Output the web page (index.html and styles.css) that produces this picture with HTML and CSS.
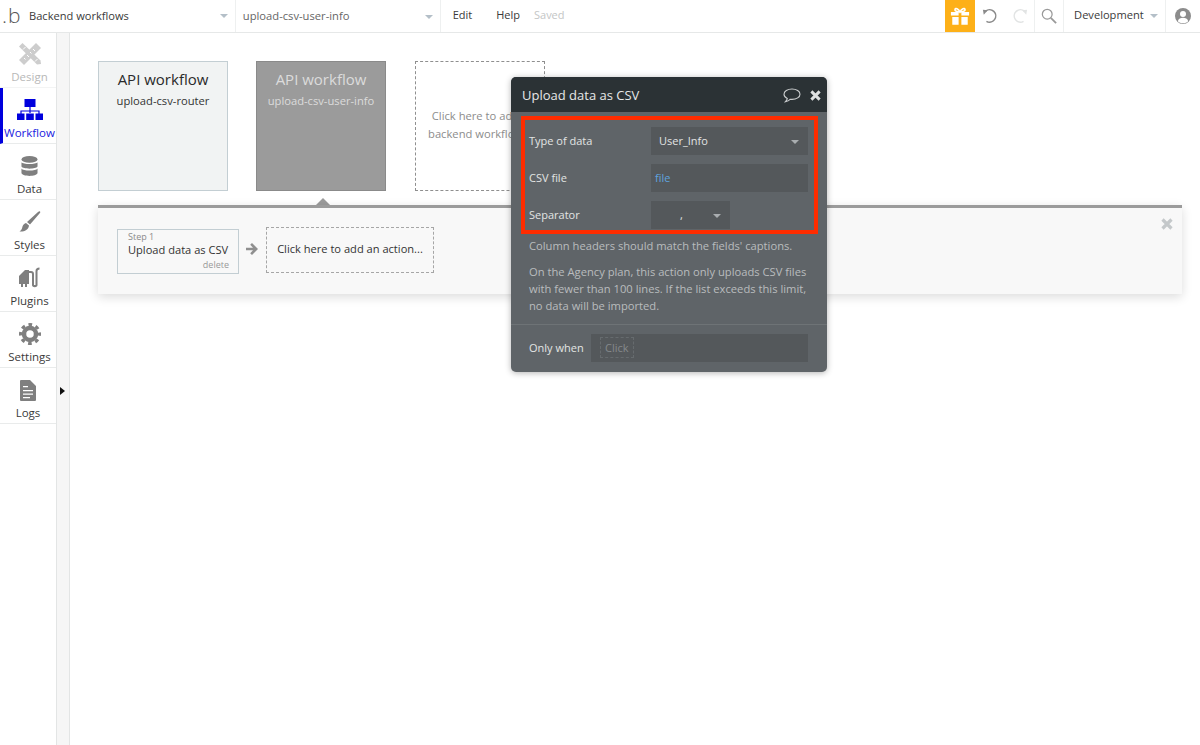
FILE: index.html
```html
<!DOCTYPE html>
<html lang="en">
<head>
    <meta charset="UTF-8">
    <title>Backend workflows</title>
    <meta name="viewport" content="width=device-width, initial-scale=1.0">
    <link rel="stylesheet" href="styles.css">
</head>
<body>
    <header class="topbar">
        <div class="logo"><span class="logo-dot">.</span>b</div>
        <div class="drop drop-page">
            <span>Backend workflows</span>
            <i class="caret"></i>
        </div>
        <div class="drop drop-flow">
            <span>upload-csv-user-info</span>
            <i class="caret"></i>
        </div>
        <nav class="menu">
            <span class="menu-edit">Edit</span>
            <span class="menu-help">Help</span>
            <span class="menu-saved">Saved</span>
        </nav>
        <div class="gift">
            <svg width="20" height="19" viewBox="0 0 22 20">
                <path fill="#fff" d="M1 5h8.500v4H1zM12.500 5H21v4h-8.500zM2.500 10.500h7V19h-7zM12.500 10.500h7V19h-7z"/>
                <path fill="none" stroke="#fff" stroke-width="1.800" d="M11 5C9 1 6 .5 5.500 2.200 5 4 8 5 11 5c3 0 6-1 5.500-2.800C16 .5 13 1 11 5z"/>
            </svg>
        </div>
        <div class="tool tool-undo">
            <svg width="16" height="16" viewBox="0 0 18 18">
                <path fill="none" stroke="#8a8a8a" stroke-width="1.700" d="M4 3.500A7 7 0 1 1 5 15"/>
                <path fill="#8a8a8a" d="M1 2l5.500.5L2 7.500z"/>
            </svg>
        </div>
        <div class="tool tool-redo">
            <svg width="16" height="16" viewBox="0 0 18 18">
                <path fill="none" stroke="#e2e4e4" stroke-width="1.700" d="M14 3.500A7 7 0 1 0 13 15"/>
                <path fill="#e2e4e4" d="M17 2l-5.500.5L16 7.500z"/>
            </svg>
        </div>
        <div class="tool tool-search">
            <svg width="16" height="16" viewBox="0 0 18 18">
                <circle cx="7" cy="7" r="5.500" fill="none" stroke="#999" stroke-width="1.400"/>
                <path stroke="#999" stroke-width="2" d="M11 11l6 6"/>
            </svg>
        </div>
        <div class="drop drop-env">
            <span>Development</span>
            <i class="caret"></i>
        </div>
        <div class="tool tool-user">
            <svg width="16" height="16" viewBox="0 0 16 16">
                <circle cx="8" cy="8" r="8" fill="#8c8c8c"/>
                <circle cx="8" cy="6" r="3" fill="#fff"/>
                <path fill="#fff" d="M2.800 13.200C3.500 10.500 5.500 9.800 8 9.800s4.500.7 5.200 3.400C11.800 14.700 10 15.300 8 15.300s-3.800-.6-5.200-2.100z"/>
            </svg>
        </div>
    </header>

    <div class="main">
        <aside class="sidebar">
            <div class="tab tab-muted">
                <svg width="22" height="22" viewBox="0 0 22 22">
                    <path fill="#cdcdcd" d="M3.500 0L0 3.500 18 21.500l4-.5-.5-3.500z"/>
                    <path fill="#cdcdcd" d="M17 0l5 5L5 22 0 17z"/>
                    <path stroke="#fff" stroke-width="1" d="M14 6l2 2M11 9l1.500 1.500M8 12l2 2M5 15l1.500 1.500M4 6.500L6.500 4M16 18.500l2.500-2.500"/>
                </svg>
                <span>Design</span>
            </div>
            <div class="tab tab-active">
                <svg width="26" height="22" viewBox="0 0 26 22">
                    <path fill="none" stroke="#0000dd" stroke-width="1.200" d="M13 8v6M4 15v-3h18v3"/>
                    <path fill="#0000dd" d="M7.500 0h11v8h-11zM0 14.500h7.500V21H0zM9.200 14.500h7.600V21H9.200zM18.500 14.500H26V21h-7.500z"/>
                </svg>
                <span>Workflow</span>
            </div>
            <div class="tab">
                <svg width="17" height="21" viewBox="0 0 18 22">
                    <ellipse cx="9" cy="3.500" rx="8.500" ry="3.500" fill="#7f7f7f"/>
                    <path fill="#7f7f7f" d="M.5 6.500C2 9 16 9 17.500 6.500v4.500C16 14 2 14 .5 11zM.5 13C2 16 16 16 17.500 13v5c-1 4-16 4-17 0z"/>
                </svg>
                <span>Data</span>
            </div>
            <div class="tab">
                <svg width="22" height="22" viewBox="0 0 22 22">
                    <path fill="#7f7f7f" d="M21 .5c.5.500.5 1-.5 2L11 13.500 8 11 19 1c1-.8 1.500-1 2-.5zM7 12l3 2.500C9.500 19 5 21 .500 20.500 3 19 3 17 3.500 15.500 4 13.500 5.500 12.500 7 12z"/>
                </svg>
                <span>Styles</span>
            </div>
            <div class="tab">
                <svg width="24" height="22" viewBox="0 0 24 22">
                    <path fill="#7f7f7f" d="M3 7l4-4h4v14H9v3H7v-3H5v3H3v-3H1V9z"/>
                    <path fill="none" stroke="#7f7f7f" stroke-width="2" d="M11 5h2c1.500 0 2 1 2 2v11c0 1.500 3.500 1.500 3.500 0V4c0-1.500 1-2.500 3-2.500"/>
                </svg>
                <span>Plugins</span>
            </div>
            <div class="tab">
                <svg width="22" height="22" viewBox="0 0 22 22">
                    <circle cx="11" cy="11" r="6" fill="none" stroke="#7f7f7f" stroke-width="4.500"/>
                    <circle cx="11" cy="11" r="9.500" fill="none" stroke="#7f7f7f" stroke-width="3" stroke-dasharray="3.700 3.760" stroke-dashoffset="1.850"/>
                </svg>
                <span>Settings</span>
            </div>
            <div class="tab tab-logs">
                <svg width="16" height="21" viewBox="0 0 16 21">
                    <path fill="#7f7f7f" fill-rule="evenodd" d="M1 0h9l6 6v14a1 1 0 0 1-1 1H1a1 1 0 0 1-1-1V1a1 1 0 0 1 1-1zM3 6v1.300h5V6zM3 10v1.300h10V10zM3 13.500v1.300h10v-1.300zM3 17v1.300h7V17z"/>
                </svg>
                <span>Logs</span>
            </div>
        </aside>
        <div class="strip"><i class="strip-arrow"></i></div>

        <section class="canvas">
            <div class="cards">
                <div class="card">
                    <h3>API workflow</h3>
                    <p>upload-csv-router</p>
                </div>
                <div class="card card-selected">
                    <h3>API workflow</h3>
                    <p>upload-csv-user-info</p>
                    <i class="card-pointer"></i>
                </div>
                <div class="card card-add">
                    <p>Click here to add a<br>backend workflow...</p>
                </div>
            </div>

            <div class="actions">
                <div class="step">
                    <small>Step 1</small>
                    <strong>Upload data as CSV</strong>
                    <em>delete</em>
                </div>
                <svg class="step-arrow" width="14" height="14" viewBox="0 0 14 14">
                    <path fill="#8f8f8f" d="M7 1l6 6-6 6-1.800-1.800L8 8.300H1V5.700h7L5.200 2.800z"/>
                </svg>
                <div class="add-action">Click here to add an action...</div>
                <svg class="close-panel" width="12" height="12" viewBox="0 0 12 12">
                    <path stroke="#c4c8ca" stroke-width="3.200" d="M1.500 1.500l9 9M10.500 1.500l-9 9"/>
                </svg>
            </div>
        </section>
    </div>

    <div class="modal">
        <div class="modal-head">
            <span class="modal-title">Upload data as CSV</span>
            <svg width="18" height="15" viewBox="0 0 18 15">
                <path fill="none" stroke="#c9cccd" stroke-width="1.100" d="M9 1C4.500 1 1 3.300 1 6.200c0 1.800 1.300 3.300 3.300 4.200-.2 1.300-.9 2.400-1.800 3.200 1.900-.3 3.500-1.100 4.600-2.300.6.100 1.200.1 1.900.1 4.500 0 8-2.300 8-5.200S13.500 1 9 1z"/>
            </svg>
            <svg class="modal-close" width="11" height="11" viewBox="0 0 12 12">
                <path stroke="#dfe1e2" stroke-width="3.200" d="M1.500 1.500l9 9M10.500 1.500l-9 9"/>
            </svg>
        </div>
        <div class="modal-body">
            <div class="highlight">
                <div class="field">
                    <label>Type of data</label>
                    <div class="input">User_Info<i class="caret caret-dark"></i></div>
                </div>
                <div class="field">
                    <label>CSV file</label>
                    <div class="input input-file">file</div>
                </div>
                <div class="field">
                    <label>Separator</label>
                    <div class="input input-small"><span>,</span><i class="caret caret-dark"></i></div>
                </div>
            </div>
            <p class="note note-first">Column headers should match the fields' captions.</p>
            <p class="note">On the Agency plan, this action only uploads CSV files with fewer than 100 lines. If the list exceeds this limit, no data will be imported.</p>
        </div>
        <div class="modal-foot">
            <label>Only when</label>
            <div class="input input-when"><span class="click-tag">Click</span></div>
        </div>
    </div>
</body>
</html>
```

FILE: styles.css
```css
* {
    box-sizing: border-box;
}

body {
    margin: 0;
    height: 745px;
    overflow: hidden;
    background: #fff;
    color: #333;
    font-family: "Open Sans", sans-serif;
    font-size: 11px;
    position: relative;
}

.topbar {
    height: 33px;
    display: flex;
    align-items: stretch;
    border-bottom: 1px solid #e6e8e8;
    background: #fff;
}

.logo {
    width: 23px;
    padding-left: 2px;
    font-size: 21px;
    font-weight: 300;
    line-height: 30px;
    color: #555;
}

.logo-dot {
    margin-right: 1px;
}

.drop {
    display: flex;
    align-items: center;
    justify-content: space-between;
    border-right: 1px solid #eef0f0;
    font-size: 11.100px;
    color: #3a3a3a;
}

.drop-page {
    width: 213px;
    padding: 0 7px 2px 6px;
}

.drop-flow {
    width: 205px;
    padding: 0 7px 1px 7px;
    color: #666;
    font-size: 11.200px;
}

.caret {
    width: 0;
    height: 0;
    border-left: 4.500px solid transparent;
    border-right: 4.500px solid transparent;
    border-top: 4.500px solid #b4bfc8;
    margin-top: 2px;
}

.menu {
    width: 505px;
    display: flex;
    align-items: center;
    padding: 0 0 3px 12px;
    font-size: 11px;
    color: #3a3a3a;
}

.menu-edit {
    margin-right: 24px;
}

.menu-help {
    margin-right: 14px;
}

.menu-saved {
    color: #c4c6c6;
}

.gift {
    width: 30px;
    background: #fdb018;
    display: flex;
    align-items: center;
    justify-content: center;
}

.tool {
    display: flex;
    align-items: center;
    justify-content: center;
}

.tool-undo {
    width: 30px;
}

.tool-redo {
    width: 30px;
    border-right: 1px solid #eef0f0;
}

.tool-search {
    width: 29px;
    border-right: 1px solid #eef0f0;
}

.drop-env {
    width: 102px;
    padding: 0 7px 3px 10px;
}

.tool-user {
    width: 34px;
}

.main {
    display: flex;
    height: 712px;
}

.sidebar {
    width: 57px;
    background: #fff;
    border-right: 1px solid #e3e5e5;
}

.tab {
    height: 56px;
    display: flex;
    flex-direction: column;
    align-items: center;
    justify-content: flex-end;
    gap: 4px;
    padding: 0 0 2px 3px;
    border-bottom: 1px solid #e9ebeb;
    color: #3a3a3a;
    font-size: 11.500px;
    line-height: 16px;
}

.tab svg {
    flex: none;
}

.tab:first-child {
    height: 55px;
    border-bottom-color: #f3f4f4;
}

.tab-muted {
    color: #b8b8b8;
}

.tab-active {
    color: #1a1ae0;
    border-left: 3px solid #0000dd;
    padding-left: 0;
}

.tab-logs {
    padding-right: 3px;
}

.strip {
    width: 13px;
    background: #f6f6f6;
    border-right: 1px solid #e3e5e5;
    position: relative;
}

.strip-arrow {
    position: absolute;
    left: 3px;
    top: 354px;
    width: 0;
    height: 0;
    border-top: 4px solid transparent;
    border-bottom: 4px solid transparent;
    border-left: 5px solid #111;
}

.canvas {
    flex: 1;
    padding: 28px 18px 0 28px;
}

.cards {
    display: flex;
    gap: 28px;
}

.card {
    width: 130px;
    height: 130px;
    background: #f1f3f3;
    border: 1px solid #c3ced3;
    text-align: center;
    padding-top: 6px;
    position: relative;
}

.card h3 {
    margin: 0;
    font-size: 15px;
    font-weight: 400;
    line-height: 22px;
    color: #2a2a2a;
}

.card p {
    margin: 3px 0 0;
    font-size: 11.200px;
    line-height: 16px;
    color: #333;
}

.card-selected {
    background: #9b9b9b;
    border-color: #8a8a8a;
    margin-right: 1px;
}

.card-selected h3,
.card-selected p {
    color: #dcdcdc;
}

.card-pointer {
    position: absolute;
    left: 59px;
    bottom: -15px;
    width: 0;
    height: 0;
    border-left: 7px solid transparent;
    border-right: 7px solid transparent;
    border-bottom: 7px solid #9b9b9b;
}

.card-add {
    background: #fff;
    border: 1px dashed #8f8f8f;
    padding-top: 45px;
    color: #8c8c8c;
}

.card-add p {
    margin: 0;
    line-height: 18px;
    color: #8c8c8c;
}

.actions {
    margin-top: 14px;
    height: 89px;
    background: #f8f8f8;
    border-top: 3px solid #9b9b9b;
    box-shadow: 0 3px 10px rgba(0, 0, 0, 0.14);
    display: flex;
    align-items: flex-start;
    padding: 19px 0 0 19px;
    position: relative;
}

.step {
    width: 122px;
    height: 45px;
    margin-top: 2px;
    border: 1px solid #c3ced3;
    padding: 1px 9px 0 10px;
    display: flex;
    flex-direction: column;
}

.step small {
    font-size: 9px;
    line-height: 12px;
    color: #8a8a8a;
}

.step strong {
    font-size: 11.100px;
    font-weight: 400;
    line-height: 14px;
    color: #333;
}

.step em {
    font-style: normal;
    font-size: 9px;
    line-height: 15px;
    text-align: right;
    color: #999;
}

.step-arrow {
    margin: 15px 7px 0 6px;
}

.add-action {
    width: 168px;
    height: 46px;
    border: 1px dashed #a6a6a6;
    display: flex;
    align-items: center;
    justify-content: center;
    padding-bottom: 4px;
    font-size: 11.100px;
    color: #333;
}

.close-panel {
    position: absolute;
    right: 9px;
    top: 10px;
}

.modal {
    position: absolute;
    left: 511px;
    top: 77px;
    width: 316px;
    height: 295px;
    background: #5f6468;
    border-radius: 5px;
    box-shadow: 0 1px 6px rgba(0, 0, 0, 0.3);
    color: #e2e4e4;
    overflow: hidden;
}

.modal-head {
    height: 35px;
    background: #2b3235;
    display: flex;
    align-items: center;
    padding: 1px 6px 0 11px;
    font-size: 13px;
    color: #e6e8e8;
}

.modal-title {
    flex: 1;
}

.modal-close {
    margin-left: 9px;
}

.modal-body {
    padding: 4px 9px 0 10px;
}

.highlight {
    border: 4px solid #ff2c00;
    height: 118px;
    padding: 7px 6px 0 4px;
    display: flex;
    flex-direction: column;
    gap: 9px;
}

.field {
    display: flex;
    align-items: center;
    height: 28px;
    font-size: 11px;
}

.field label {
    width: 122px;
    padding-bottom: 2px;
}

.input {
    background: #54585b;
    height: 28px;
    flex: 1;
    display: flex;
    align-items: center;
    justify-content: space-between;
    padding: 0 9px 1px 8px;
    font-size: 11px;
    color: #e2e4e4;
}

.caret-dark {
    border-top-color: #a9adb0;
}

.input-file {
    padding-left: 4px;
    color: #5fa3de;
}

.input-small {
    flex: none;
    width: 79px;
    padding-left: 29px;
}

.note {
    margin: 9px 0 0 8px;
    font-size: 11.200px;
    line-height: 17px;
    color: #b9bcbe;
}

.note-first {
    margin-top: 3px;
}

.modal-foot {
    margin-top: 10px;
    height: 48px;
    border-top: 1px solid #6e7376;
    display: flex;
    align-items: center;
    padding: 0 19px 2px 18px;
    font-size: 11px;
}

.modal-foot label {
    width: 62px;
}

.input-when {
    justify-content: flex-start;
    padding-left: 9px;
    color: #85898c;
}

.click-tag {
    padding: 2px 4px;
    border: 1px dashed #666b6e;
}
```
